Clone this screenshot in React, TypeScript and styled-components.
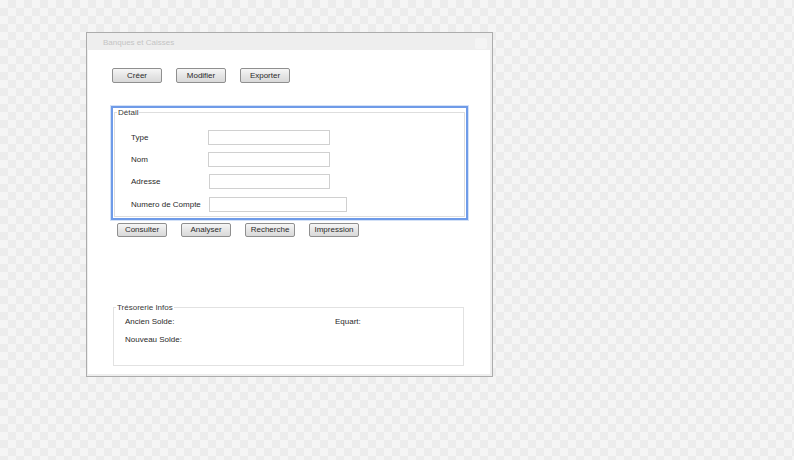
import React from 'react';
import styled, { createGlobalStyle } from 'styled-components';

const GlobalStyle = createGlobalStyle`
  html, body {
    margin: 0;
    padding: 0;
    height: 100%;
  }
  body {
    background: repeating-conic-gradient(#ececec 0 25%, #f5f5f5 0 50%) 0 0 / 16px 16px;
    font-family: "Liberation Sans", Arial, sans-serif;
    font-size: 8px;
    color: #2a2a2a;
  }
`;

const topButtons = ['Créer', 'Modifier', 'Exporter'];
const bottomButtons = ['Consulter', 'Analyser', 'Recherche', 'Impression'];

const fields = [
  { label: 'Type', width: 122, shift: 0, spaced: false },
  { label: 'Nom', width: 122, shift: 0, spaced: false },
  { label: 'Adresse', width: 121, shift: 1, spaced: false },
  { label: 'Numero de Compte', width: 138, shift: 1, spaced: true },
];

const App = () => {
  return (
    <>
      <GlobalStyle />
      <Window>
        <TitleBar>
          <Title>Banques et Caisses</Title>
          <CornerBox />
        </TitleBar>
        <Content>
          <ButtonRow $left={24} $top={18} $gap={14}>
            {topButtons.map((b) => (
              <ActionButton key={b} type="button" $height={15}>
                {b}
              </ActionButton>
            ))}
          </ButtonRow>

          <FocusFrame>
            <DetailSet>
              <Legend>Détail</Legend>
              <FormGrid>
                {fields.map((f) => (
                  <FormRow key={f.label} $spaced={f.spaced}>
                    <FieldLabel>{f.label}</FieldLabel>
                    <TextInput $width={f.width} $shift={f.shift} />
                  </FormRow>
                ))}
              </FormGrid>
            </DetailSet>
          </FocusFrame>

          <ButtonRow $left={29} $top={3} $gap={14}>
            {bottomButtons.map((b) => (
              <ActionButton key={b} type="button" $height={14}>
                {b}
              </ActionButton>
            ))}
          </ButtonRow>

          <InfoSet>
            <Legend>Trésorerie Infos</Legend>
            <InfoGrid>
              <InfoText>Ancien Solde:</InfoText>
              <InfoText>Equart:</InfoText>
              <InfoText>Nouveau Solde:</InfoText>
            </InfoGrid>
          </InfoSet>
        </Content>
      </Window>
    </>
  );
};

export default App;

const Window = styled.div`
  box-sizing: border-box;
  margin: 32px 0 0 86px;
  width: 407px;
  height: 345px;
  border: 1px solid #acacac;
  background: #eeeeee;
  padding: 0 2px 2px 1px;
  display: flex;
  flex-direction: column;
`;

const TitleBar = styled.div`
  height: 17px;
  display: flex;
  align-items: center;
  justify-content: space-between;
  padding: 0 3px 0 15px;
`;

const Title = styled.span`
  color: #c4c4c4;
  font-size: 8px;
  margin-top: 2px;
`;

const CornerBox = styled.div`
  width: 12px;
  height: 11px;
  border-radius: 2px;
  background: #f4f4f4;
  margin-top: 3px;
`;

const Content = styled.div`
  flex: 1;
  background: #ffffff;
  display: flex;
  flex-direction: column;
`;

const ButtonRow = styled.div<{ $left: number; $top: number; $gap: number }>`
  display: flex;
  gap: ${(p) => p.$gap}px;
  margin: ${(p) => p.$top}px 0 0 ${(p) => p.$left}px;
`;

const ActionButton = styled.button<{ $height: number }>`
  box-sizing: border-box;
  width: 50px;
  height: ${(p) => p.$height}px;
  padding: 0;
  border: 1px solid #8f8f8f;
  border-radius: 2px;
  background: linear-gradient(#f6f6f6, #e6e6e6 50%, #d9d9d9);
  font-family: "Liberation Sans", Arial, sans-serif;
  font-size: 8px;
  color: #2a2a2a;
  line-height: 1;
`;

const FocusFrame = styled.div`
  box-sizing: border-box;
  margin: 23px 0 0 23px;
  width: 357px;
  height: 114px;
  border: 2px solid #6f9be8;
  box-shadow: 0 0 0 1px #d3e1f7;
  padding: 0 1px 1px 1px;
  display: flex;
`;

const DetailSet = styled.fieldset`
  flex: 1;
  margin: 0;
  padding: 0;
  border: 1px solid #dedede;
  min-width: 0;
`;

const Legend = styled.legend`
  padding: 0 1px;
  margin-left: 2px;
  font-size: 8px;
  line-height: 9px;
  color: #3a3a3a;
`;

const FormGrid = styled.div`
  display: flex;
  flex-direction: column;
  gap: 7px;
  padding: 13px 0 0 16px;
`;

const FormRow = styled.div<{ $spaced: boolean }>`
  display: grid;
  grid-template-columns: 77px auto;
  align-items: center;
  margin-top: ${(p) => (p.$spaced ? 1 : 0)}px;
`;

const FieldLabel = styled.span`
  font-size: 8px;
  color: #2a2a2a;
`;

const TextInput = styled.input<{ $width: number; $shift: number }>`
  box-sizing: border-box;
  width: ${(p) => p.$width}px;
  height: 15px;
  margin: 0 0 0 ${(p) => p.$shift}px;
  padding: 0 3px;
  border: 1px solid #d0d0d0;
  background: #ffffff;
  outline: none;
  font-family: "Liberation Sans", Arial, sans-serif;
  font-size: 8px;
`;

const InfoSet = styled.fieldset`
  box-sizing: border-box;
  margin: 66px 0 0 25px;
  width: 351px;
  height: 63px;
  padding: 0;
  border: 1px solid #e2e2e2;
`;

const InfoGrid = styled.div`
  display: grid;
  grid-template-columns: 210px auto;
  row-gap: 8px;
  padding: 5px 0 0 11px;
`;

const InfoText = styled.span`
  font-size: 8px;
  line-height: 10px;
  color: #2a2a2a;
`;
